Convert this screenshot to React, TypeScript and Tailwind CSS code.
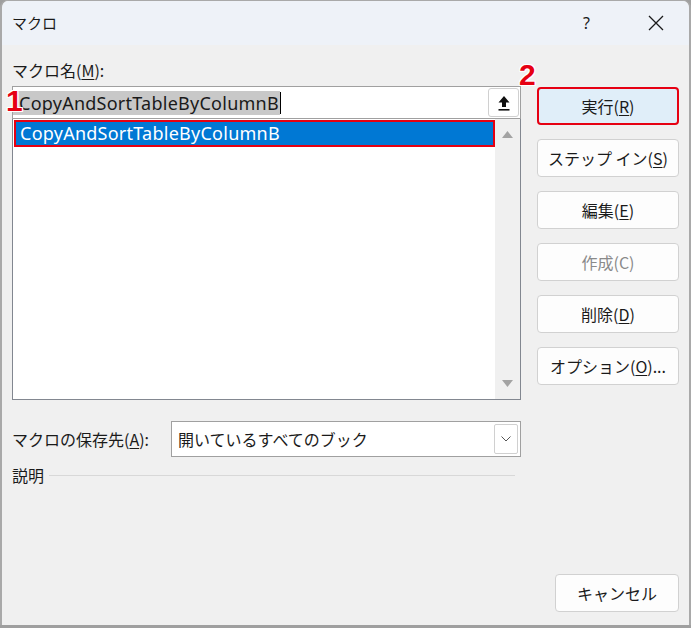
import React from "react";

const jp = '"Noto Sans CJK JP", "Noto Sans", sans-serif';
const latin = '"Noto Sans", "Noto Sans CJK JP", sans-serif';

const Mark = ({ n }: { n: string }) => (
  <span
    className="text-[30px] font-bold leading-none text-[#e60012]"
    style={{
      fontFamily: '"Liberation Sans", Arial, sans-serif',
      textShadow:
        "1px 0 #fff, -1px 0 #fff, 0 1px #fff, 0 -1px #fff, 1px 1px #fff, -1px -1px #fff, 1px -1px #fff, -1px 1px #fff",
    }}
  >
    {n}
  </span>
);

const Btn = ({
  label,
  u,
  rest = "",
  disabled = false,
  active = false,
}: {
  label: string;
  u?: string;
  rest?: string;
  disabled?: boolean;
  active?: boolean;
}) => (
  <button
    className={
      "flex h-[38px] w-[142px] items-center justify-center rounded-[4px] text-[16px] " +
      (active
        ? "border-2 border-[#e60012] bg-[#e0eef9] text-[#1a1a1a]"
        : "border border-[#d1d1d1] bg-[#fdfdfd] " +
          (disabled ? "text-[#8a8a8a]" : "text-[#1a1a1a]"))
    }
    style={{ fontFamily: jp }}
  >
    {label}
    {u ? <span className="underline underline-offset-2">{u}</span> : null}
    {rest}
  </button>
);

export default function App() {
  return (
    <div className="h-[628px] w-[691px] overflow-hidden bg-[#9f9f9f]">
      <div className="flex h-[625px] w-[691px] flex-col overflow-hidden rounded-t-[8px] border-x-2 border-t border-[#a9a9a9] bg-[#f0f0f0]">
        {/* title bar */}
        <div className="flex h-[44px] shrink-0 items-center bg-[#eef2f8] pl-[10px]">
          <span className="text-[15px] text-[#1a1a1a]" style={{ fontFamily: jp }}>
            マクロ
          </span>
          <span
            className="ml-auto mr-[58px] text-[16px] text-[#1a1a1a]"
            style={{ fontFamily: latin }}
          >
            ?
          </span>
          <svg width="16" height="16" viewBox="0 0 16 16" className="mr-[25px]">
            <path d="M1 1 L15 15 M15 1 L1 15" stroke="#1a1a1a" strokeWidth="1.3" />
          </svg>
        </div>

        {/* body */}
        <div className="flex flex-1 flex-col pl-[10px] pr-[10px]">
          <div className="flex">
            {/* left column */}
            <div className="flex w-[509px] flex-col">
              <div
                className="flex h-[41px] items-center pt-[8px] text-[16px] text-[#1a1a1a]"
                style={{ fontFamily: jp }}
              >
                マクロ名(<span className="underline underline-offset-2">M</span>):
              </div>
              <div className="relative flex h-[33px] items-center border border-[#a0a0a0] bg-white">
                <span
                  className="bg-[#c8c8c8] pl-[6px] pr-[1px] text-[18px] leading-[24px] tracking-[0.25px] text-[#1a1a1a]"
                  style={{ fontFamily: latin }}
                >
                  CopyAndSortTableByColumnB
                </span>
                <span className="h-[22px] w-px bg-black" />
                <span className="absolute left-[-7px] top-[-1px]">
                  <Mark n="1" />
                </span>
                <div className="ml-auto mr-[1px] flex h-[29px] w-[31px] items-center justify-center rounded-[3px] border border-[#d0d0d0] bg-white">
                  <svg width="14" height="16" viewBox="0 0 14 16">
                    <path d="M7 1 L12.5 7.5 H9 V12 H5 V7.5 H1.5 Z" fill="#111" />
                    <rect x="1.5" y="14" width="11" height="1.6" fill="#111" />
                  </svg>
                </div>
              </div>
              <div className="flex h-[281px] border border-t-0 border-[#828790] bg-white">
                <div className="flex-1 pl-[1px] pt-[1px]">
                  <div
                    className="flex h-[27px] items-center border-2 border-[#e60012] bg-[#0078d4] pl-[4px] text-[18px] tracking-[0.25px] text-white"
                    style={{ fontFamily: latin }}
                  >
                    CopyAndSortTableByColumnB
                  </div>
                </div>
                <div className="flex w-[25px] flex-col items-center justify-between bg-[#f0f0f0] py-[12px]">
                  <svg width="11" height="7" viewBox="0 0 11 7">
                    <path d="M5.5 0 L11 7 H0 Z" fill="#a3a3a3" />
                  </svg>
                  <svg width="11" height="7" viewBox="0 0 11 7">
                    <path d="M0 0 H11 L5.5 7 Z" fill="#a3a3a3" />
                  </svg>
                </div>
              </div>

              <div className="mt-[21px] flex items-center">
                <span
                  className="w-[159px] text-[16px] text-[#1a1a1a]"
                  style={{ fontFamily: jp }}
                >
                  マクロの保存先(<span className="underline underline-offset-2">A</span>):
                </span>
                <div className="flex h-[36px] flex-1 items-center border border-[#a0a0a0] bg-white">
                  <span
                    className="ml-[6px] text-[16px] text-[#1a1a1a]"
                    style={{ fontFamily: jp }}
                  >
                    開いているすべてのブック
                  </span>
                  <div className="ml-auto mr-[2px] flex h-[30px] w-[24px] items-center justify-center rounded-[2px] border border-[#d0d0d0]">
                    <svg width="10" height="6" viewBox="0 0 10 6">
                      <path d="M0.5 0.5 L5 5 L9.5 0.5" stroke="#555" fill="none" strokeWidth="1" />
                    </svg>
                  </div>
                </div>
              </div>

              <div className="mt-[6px] flex items-center">
                <span className="text-[16px] text-[#1a1a1a]" style={{ fontFamily: jp }}>
                  説明
                </span>
                <div className="ml-[5px] mr-[6px] h-px flex-1 bg-[#d8d8d8]" />
              </div>
            </div>

            {/* right column */}
            <div className="ml-[16px] flex flex-col">
              <div className="relative h-[41px]">
                <span className="absolute left-[-18px] top-[15px]">
                  <Mark n="2" />
                </span>
              </div>
              <div className="mt-[1px] flex flex-col gap-[14px]">
                <Btn label="実行(" u="R" rest=")" active />
                <Btn label="ステップ イン(" u="S" rest=")" />
                <Btn label="編集(" u="E" rest=")" />
                <Btn label="作成(C)" disabled />
                <Btn label="削除(" u="D" rest=")" />
                <Btn label="オプション(" u="O" rest=")..." />
              </div>
            </div>
          </div>

          <div className="mt-auto mb-[13px] flex justify-end">
            <button
              className="flex h-[38px] w-[124px] items-center justify-center rounded-[4px] border border-[#d1d1d1] bg-[#fdfdfd] text-[16px] text-[#1a1a1a]"
              style={{ fontFamily: jp }}
            >
              キャンセル
            </button>
          </div>
        </div>
      </div>
    </div>
  );
}
